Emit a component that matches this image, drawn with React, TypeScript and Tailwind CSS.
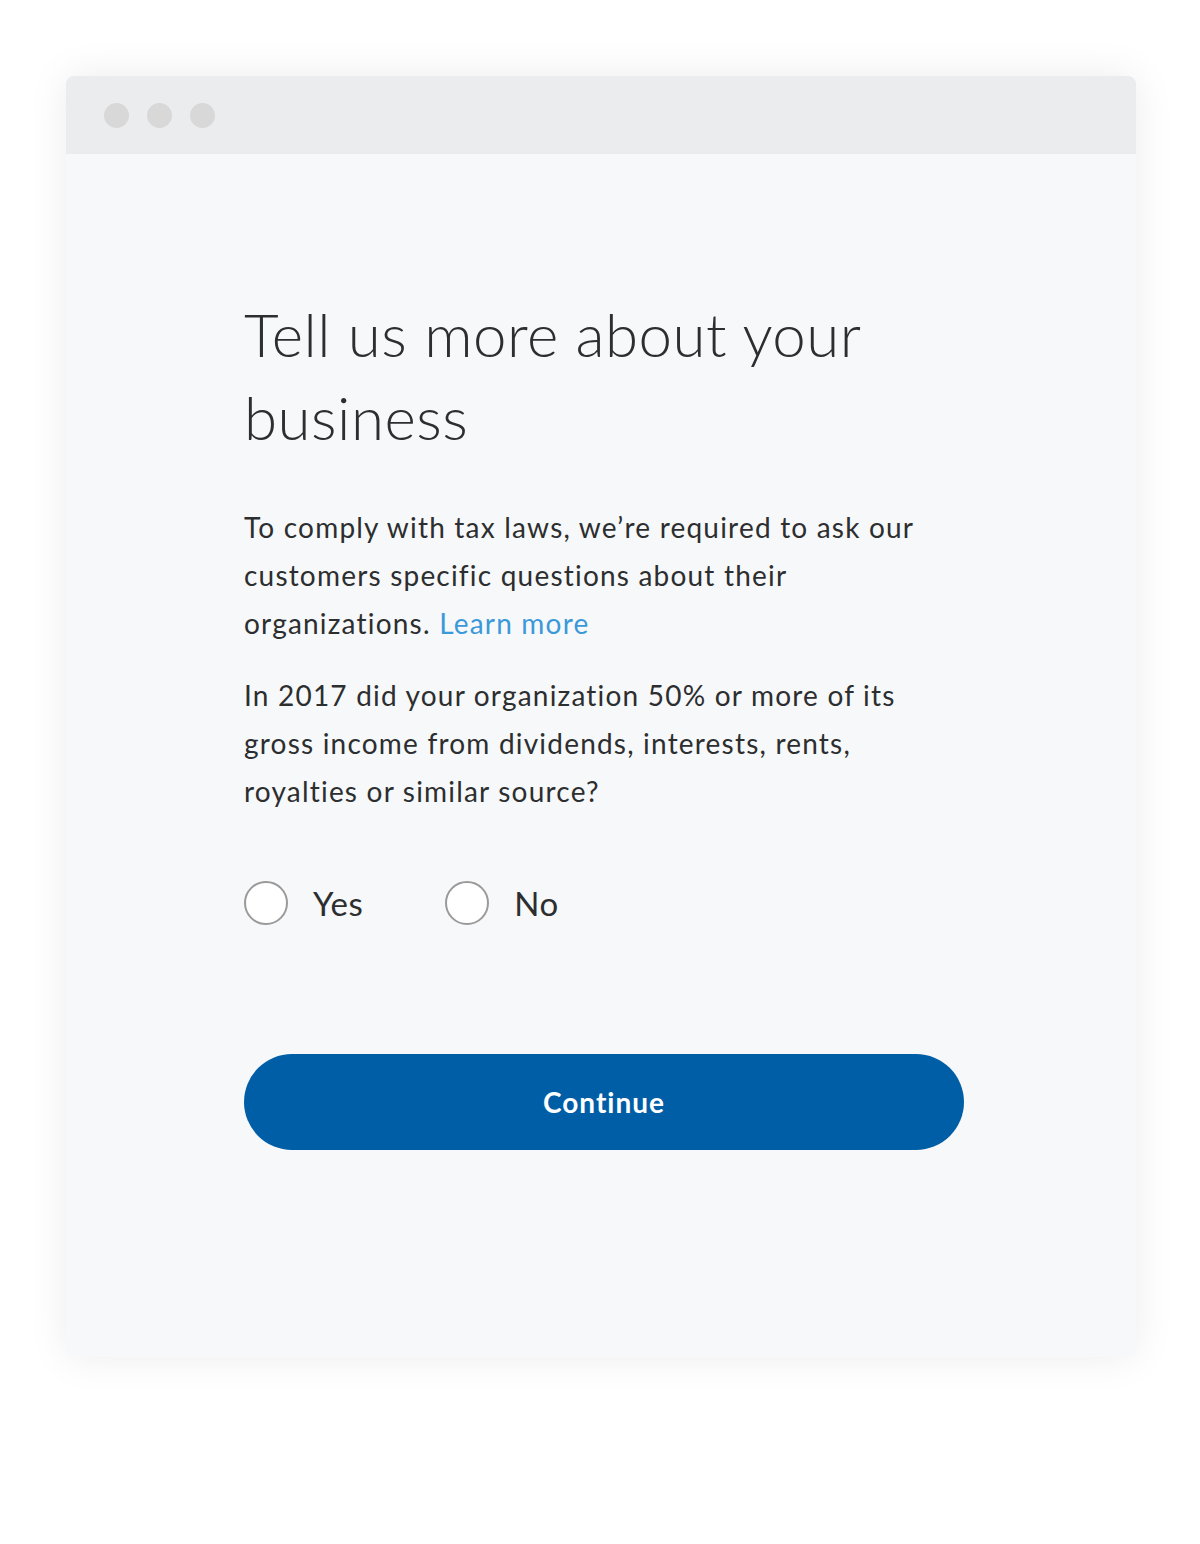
import React, { useState } from "react";

function Radio({ label, checked, onClick }: { label: string; checked: boolean; onClick: () => void }) {
  return (
    <button type="button" onClick={onClick} className="flex items-center gap-[25px]">
      <span className="w-[44px] h-[44px] rounded-full border-2 border-[#9a9a9a] bg-white flex items-center justify-center">
        {checked && <span className="w-[20px] h-[20px] rounded-full bg-[#0060a9]" />}
      </span>
      <span className="text-[33px] leading-[44px] tracking-[0.5px] text-[#2c2e2f]">{label}</span>
    </button>
  );
}

export default function App() {
  const [answer, setAnswer] = useState<string>("");

  return (
    <div className="min-h-[1544px] w-full bg-white pt-[76px] px-[66px] font-['Lato','Liberation_Sans',sans-serif]">
      <div className="w-[1070px] rounded-[8px] overflow-hidden shadow-[0_0_40px_rgba(0,0,0,0.08)]">
        {/* barra del navegador */}
        <div className="h-[78px] bg-[#ebecee] flex items-center gap-[18px] pl-[38px]">
          <span className="w-[25px] h-[25px] rounded-full bg-[#d8d8d9]" />
          <span className="w-[25px] h-[25px] rounded-full bg-[#d8d8d9]" />
          <span className="w-[25px] h-[25px] rounded-full bg-[#d8d8d9]" />
        </div>

        <div className="bg-[#f7f8fa] pt-[139px] pb-[207px] pl-[178px] pr-[172px]">
          <h1 className="text-[60px] leading-[83px] font-light tracking-[0.5px] text-[#2c2e2f] max-w-[680px]">
            Tell us more about your business
          </h1>

          <p className="mt-[44px] text-[28px] leading-[48px] tracking-[1.2px] text-[#2c2e2f] max-w-[700px]">
            To comply with tax laws, we’re required to ask our customers specific questions about their
            organizations.{" "}
            <a href="#" className="text-[#3b99d9]">
              Learn more
            </a>
          </p>

          <p className="mt-[24px] text-[28px] leading-[48px] tracking-[1.2px] text-[#2c2e2f] max-w-[700px]">
            In 2017 did your organization 50% or more of its gross income from dividends, interests, rents,
            royalties or similar source?
          </p>

          <div className="mt-[66px] flex items-center gap-[82px]">
            <Radio label="Yes" checked={answer === "yes"} onClick={() => setAnswer("yes")} />
            <Radio label="No" checked={answer === "no"} onClick={() => setAnswer("no")} />
          </div>

          <button
            type="button"
            className="mt-[129px] w-[720px] h-[96px] rounded-full bg-[#005ea6] text-white text-[28px] font-bold tracking-[1px]"
          >
            Continue
          </button>
        </div>
      </div>
    </div>
  );
}
